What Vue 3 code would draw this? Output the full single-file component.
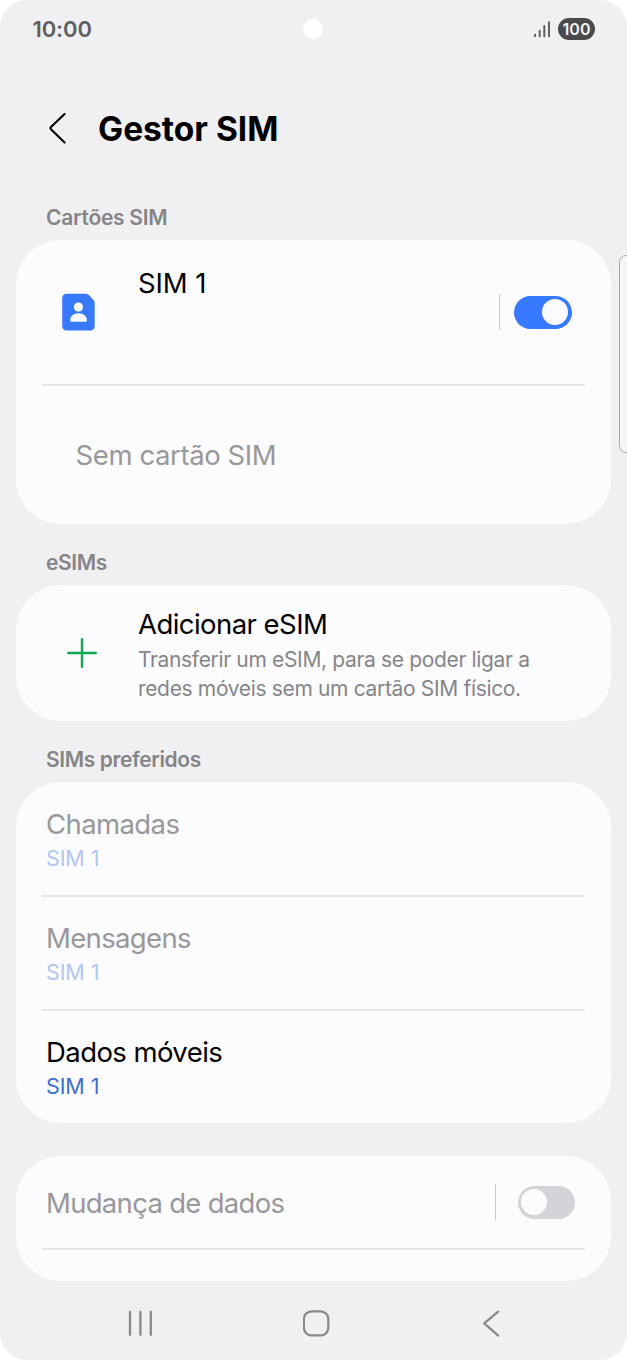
<script setup>
const preferred = [
  { title: 'Chamadas', value: 'SIM 1', name: 'calls', disabled: true },
  { title: 'Mensagens', value: 'SIM 1', name: 'messages', disabled: true },
  { title: 'Dados móveis', value: 'SIM 1', name: 'data', disabled: false },
]
</script>

<template>
  <div class="phone">
    <div class="status">
      <span class="time">10:00</span>
      <span class="camera"></span>
      <div class="indicators">
        <svg width="18" height="18" viewBox="0 0 18 18" fill="none" stroke="#5c5c5e" stroke-width="1.9" stroke-linecap="round">
          <path d="M2.1 14.8V16.2M6.7 10.6V16.2M11.3 5.9V16.2M16 2.3V16.2" />
        </svg>
        <span class="battery">100</span>
      </div>
    </div>

    <header class="header">
      <svg width="20" height="34" viewBox="0 0 20 34" fill="none" stroke="#000" stroke-width="2.1" stroke-linecap="round" stroke-linejoin="round">
        <path d="M16.6 2L2.7 15.3Q2 16.1 2.7 16.9L16.6 30.6" />
      </svg>
      <h1 class="title">Gestor SIM</h1>
    </header>

    <h2 class="label first"><span class="l-cards">Cartões SIM</span></h2>
    <section class="card sims">
      <div class="row sim-row">
        <div class="sim-icon">
          <svg width="33" height="38" viewBox="0 0 33 38">
            <g transform="translate(0 0.7)">
              <path d="M5 0H24Q25.5 0 26.6 1.1L31.7 6.5Q32.7 7.6 32.7 9V32Q32.7 36.8 28 36.8H5Q0.2 36.8 0.2 32V5Q0.2 0 5 0Z" fill="#387aff" />
              <circle cx="16.4" cy="13.3" r="4.6" fill="#fcfcff" />
              <path d="M8.2 26.9C8.2 22.3 11.8 19.6 16.5 19.6S24.9 22.3 24.9 26.9Q24.9 28.1 23.7 28.1H9.4Q8.2 28.1 8.2 26.9Z" fill="#fcfcff" />
            </g>
          </svg>
        </div>
        <p class="name sim-name">SIM 1</p>
        <span class="separator"></span>
        <span class="toggle on"></span>
      </div>
      <div class="divider"></div>
      <div class="row empty-row">
        <p class="name dim"><span class="t-empty">Sem cartão SIM</span></p>
      </div>
    </section>

    <h2 class="label"><span class="l-esims">eSIMs</span></h2>
    <section class="card esim">
      <div class="plus-icon">
        <svg width="30" height="30" viewBox="0 0 30 30" stroke="#10a850" stroke-width="2.4" stroke-linecap="round">
          <path d="M15 1.2V28.8M1.2 15H28.8" />
        </svg>
      </div>
      <div>
        <p class="name"><span class="t-add">Adicionar eSIM</span></p>
        <p class="desc">
          Transferir um eSIM, para se poder ligar a<br />
          redes móveis sem um cartão SIM físico.
        </p>
      </div>
    </section>

    <h2 class="label"><span class="l-pref">SIMs preferidos</span></h2>
    <section class="card preferred">
      <div v-for="item in preferred" :key="item.name" class="pref-row" :class="{ disabled: item.disabled }">
        <p class="name"><span :class="'t-' + item.name">{{ item.title }}</span></p>
        <p class="value">{{ item.value }}</p>
      </div>
    </section>

    <section class="card switching">
      <div class="row switch-row">
        <p class="name dim"><span class="t-switch">Mudança de dados</span></p>
        <span class="separator"></span>
        <span class="toggle"></span>
      </div>
      <div class="divider"></div>
    </section>

    <nav class="nav">
      <svg width="26" height="28" viewBox="0 0 26 28" stroke="#88888a" stroke-width="2.3" stroke-linecap="round">
        <path d="M3 3V25.8M13.4 3V25.8M23.8 3V25.8" />
      </svg>
      <svg width="28" height="28" viewBox="0 0 28 28" fill="none" stroke="#88888a" stroke-width="2.2">
        <rect x="0.9" y="2.4" width="24.4" height="24" rx="7.6" />
      </svg>
      <svg width="20" height="28" viewBox="0 0 20 28" fill="none" stroke="#88888a" stroke-width="2.2" stroke-linecap="round" stroke-linejoin="round">
        <path d="M17.2 2.6L3.2 14.4L17.2 26.6" />
      </svg>
    </nav>

    <div class="edge-panel"></div>
  </div>
</template>

<style>
body {
  background: #fff;
}
</style>

<style scoped>
.phone {
  position: relative;
  box-sizing: border-box;
  width: 627px;
  height: 1360px;
  overflow: hidden;
  border-radius: 27px;
  background: #f0f0f2;
  font-family: Inter, Roboto, sans-serif;
  color: #000;
}
h1, h2, p {
  margin: 0;
  white-space: nowrap;
}
svg {
  display: block;
  flex: none;
}
.status {
  display: grid;
  grid-template-columns: 1fr 20px 1fr;
  align-items: center;
  height: 58px;
  padding: 0 32px 0 31px;
}
.time {
  padding-left: 1.5px;
  font-size: 22px;
  font-weight: 600;
  line-height: 30px;
  letter-spacing: -0.1px;
  color: #5e5e60;
}
.camera {
  width: 20px;
  height: 20px;
  border-radius: 50%;
  background: #fff;
}
.indicators {
  display: flex;
  justify-content: flex-end;
  align-items: center;
  gap: 7px;
}
.battery {
  width: 37px;
  height: 22px;
  border-radius: 11px;
  background: #4a4a4c;
  color: #f4f4f6;
  font-size: 16px;
  font-weight: 600;
  line-height: 22px;
  text-align: center;
}
.header {
  display: flex;
  align-items: center;
  height: 141px;
  padding-left: 48px;
  gap: 30px;
}
.title {
  font-size: 33.5px;
  font-weight: 700;
  line-height: 44px;
}
.label {
  padding: 23.6px 0 6.9px 46px;
  font-size: 21px;
  font-weight: 600;
  line-height: 30px;
  letter-spacing: -0.38px;
  color: #858587;
}
.label.first {
  padding-top: 4.1px;
}
.l-cards {
  letter-spacing: -0.27px;
}
.card {
  box-sizing: border-box;
  width: 594.5px;
  margin-left: 16px;
  border-radius: 45px;
  background: #fcfcfe;
}
.row {
  display: flex;
  align-items: center;
}
.divider {
  height: 2px;
  margin: 0 26px;
  background: #e6e6e8;
}
.sims {
  height: 284.5px;
}
.sim-row {
  height: 144px;
  padding: 0 39px 0 46px;
}
.sim-icon {
  width: 76px;
}
.sim-name {
  flex: 1;
  margin-bottom: 58px;
  letter-spacing: -0.1px;
}
.separator {
  width: 1px;
  height: 36px;
  background: #c8c8cb;
}
.toggle {
  box-sizing: border-box;
  width: 57.5px;
  height: 33px;
  margin-top: 1px;
  padding: 3.5px;
  border-radius: 17px;
  background: #d4d4d8;
}
.toggle::before {
  content: '';
  display: block;
  width: 26px;
  height: 26px;
  border-radius: 50%;
  background: #fcfcfe;
}
.toggle.on {
  margin-left: 14.5px;
  background: #387aff;
}
.toggle.on::before {
  margin-left: auto;
}
.empty-row {
  height: 138.5px;
  padding-left: 59.5px;
}
.name {
  font-size: 27.5px;
  font-weight: 400;
  line-height: 34px;
}
.t-empty {
  letter-spacing: -0.4px;
}
.t-add {
  letter-spacing: -0.55px;
}
.t-calls {
  letter-spacing: -0.6px;
}
.t-messages {
  letter-spacing: -0.65px;
}
.t-data {
  letter-spacing: -0.57px;
}
.t-switch {
  letter-spacing: -0.7px;
}
.dim,
.disabled .name {
  color: #98989a;
}
.esim {
  display: flex;
  height: 136.5px;
  padding-top: 22.5px;
}
.plus-icon {
  width: 71.5px;
  padding: 31px 0 0 50.5px;
}
.desc {
  margin-top: 3.5px;
  font-size: 21px;
  line-height: 29px;
  letter-spacing: -0.34px;
  color: #858587;
}
.preferred {
  height: 341px;
}
.pref-row {
  box-sizing: border-box;
  height: 113px;
  padding: 25.5px 0 0 30px;
}
.pref-row + .pref-row {
  height: 114px;
  padding-top: 0;
}
.pref-row + .pref-row::before {
  content: '';
  display: block;
  height: 2px;
  margin: 0 26px 24.5px -4px;
  background: #e6e6e8;
}
.value {
  font-size: 21.5px;
  line-height: 34px;
  letter-spacing: -0.1px;
  color: #3c6fd0;
}
.disabled .value {
  color: #b2c6ee;
}
.switching {
  height: 125px;
  margin-top: 33px;
}
.switch-row {
  height: 92px;
  padding: 0 35.5px 0 30px;
}
.switch-row .name {
  flex: 1;
  padding-top: 2px;
}
.switch-row .toggle {
  margin-left: 21.5px;
}
.nav {
  display: flex;
  justify-content: space-between;
  padding: 28px 126px 0 127px;
}
.edge-panel {
  position: absolute;
  top: 255px;
  right: -8px;
  box-sizing: border-box;
  width: 16px;
  height: 198px;
  border: 1.6px solid #ababad;
  border-radius: 7px;
  background: #f5f5f7;
}
</style>
